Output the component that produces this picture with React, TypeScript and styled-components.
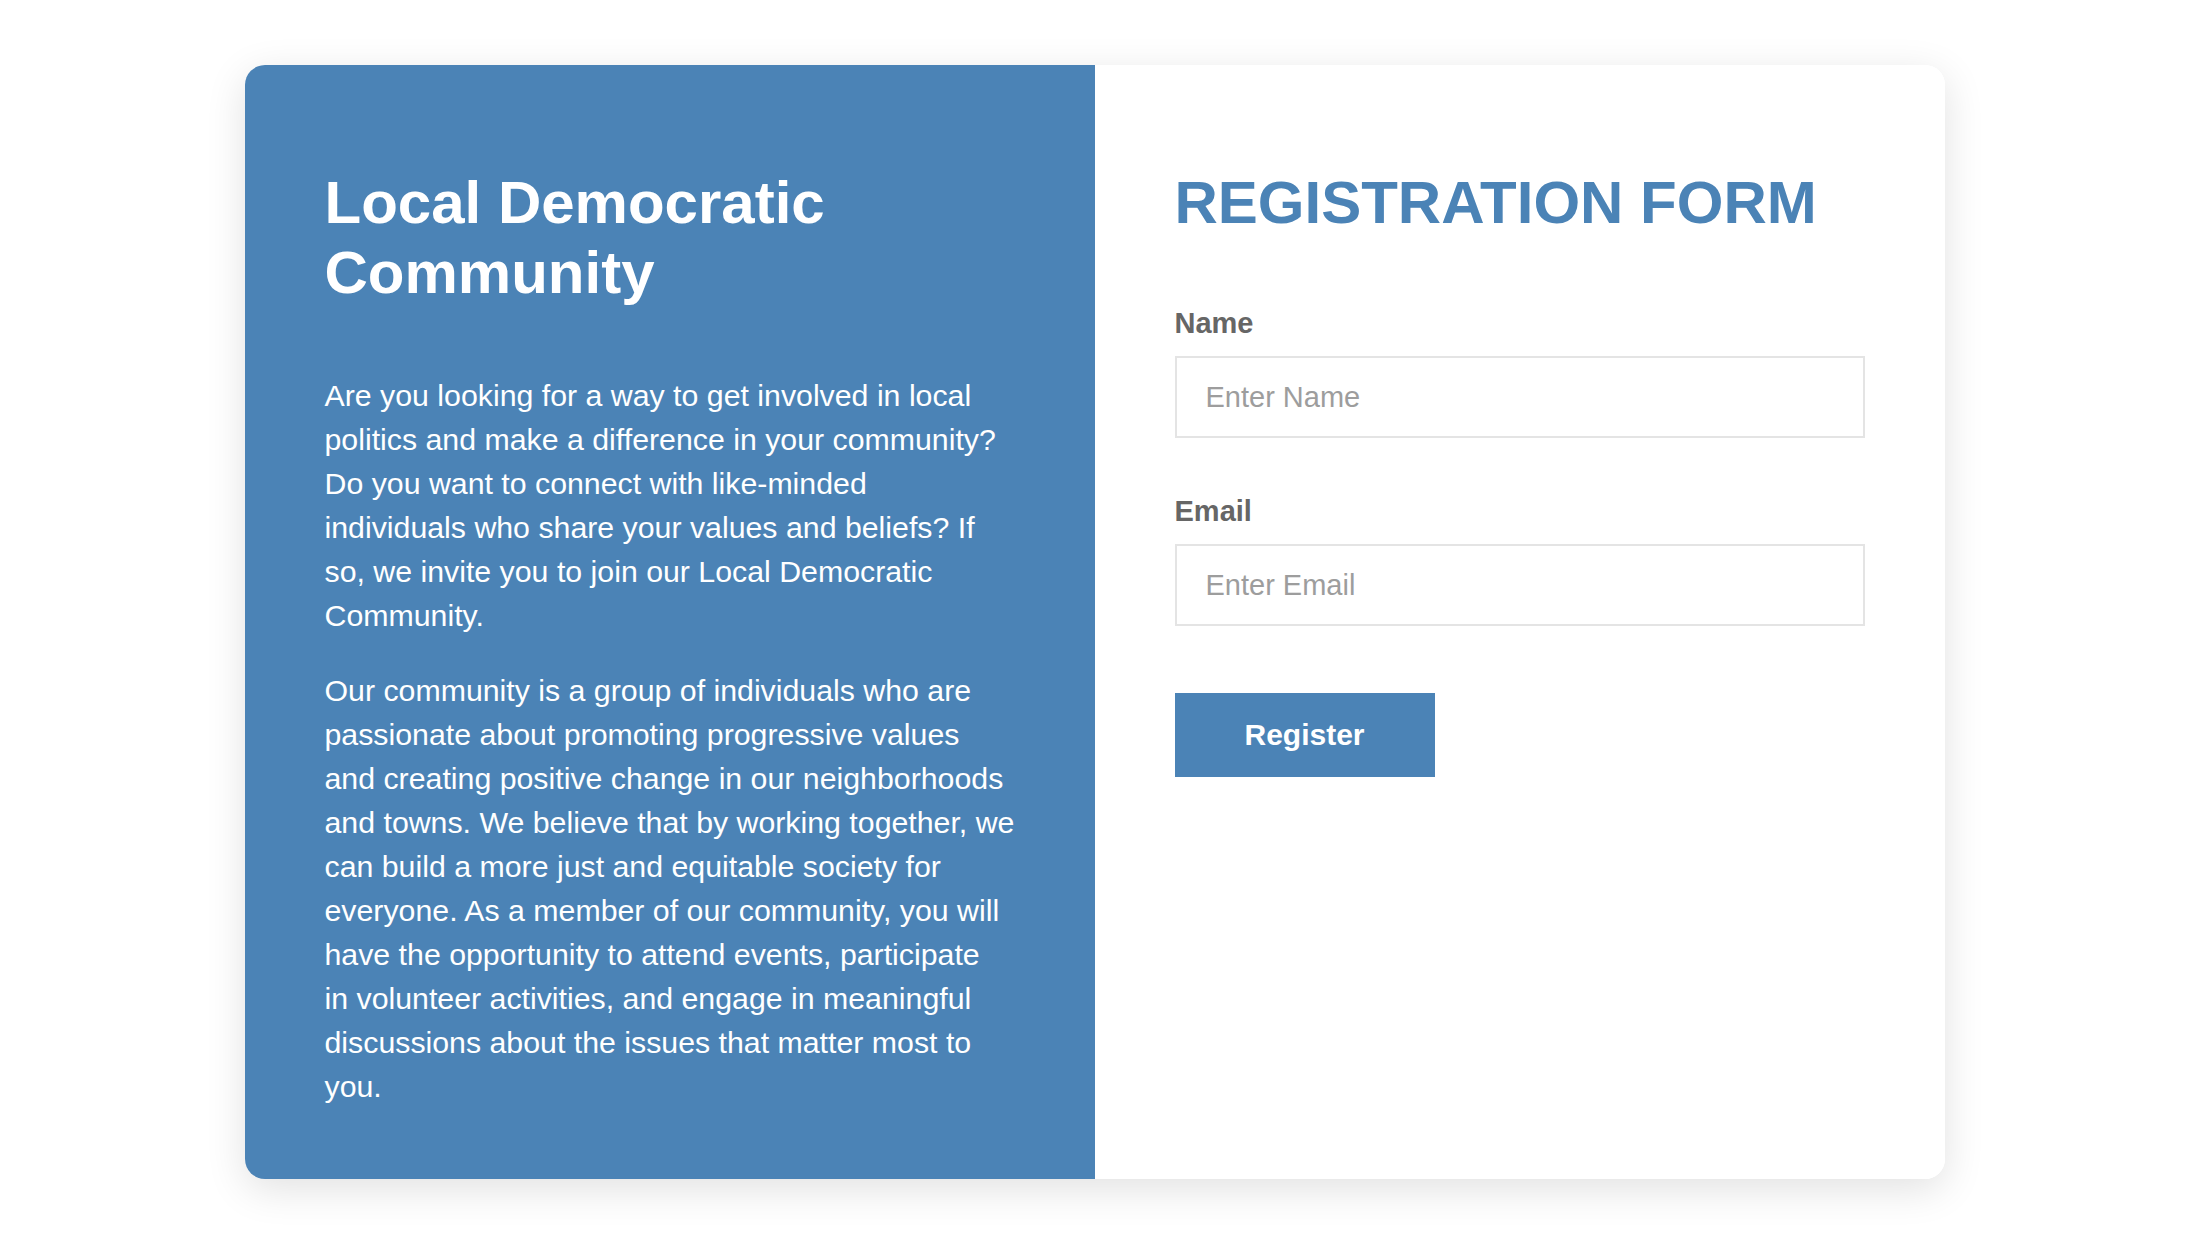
import React from "react";
import styled, { createGlobalStyle } from "styled-components";

const BLUE = "#4b83b6";

const GlobalStyle = createGlobalStyle`
  html, body {
    margin: 0;
    padding: 0;
    background: #ffffff;
  }
  body {
    font-family: "Liberation Sans", Arial, Helvetica, sans-serif;
    -webkit-font-smoothing: antialiased;
  }
  *, *::before, *::after {
    box-sizing: border-box;
  }
`;

const Page = styled.main`
  display: flex;
  justify-content: center;
  padding: 65px 0 80px;
`;

const Card = styled.section`
  width: 1700px;
  display: grid;
  grid-template-columns: 1fr 1fr;
  border-radius: 20px;
  overflow: hidden;
  background: #ffffff;
  box-shadow: 0 10px 40px rgba(0, 0, 0, 0.12);
`;

const Panel = styled.div<{ $filled?: boolean }>`
  padding: 103px 80px 70px;
  background: ${(p) => (p.$filled ? BLUE : "#ffffff")};
  color: ${(p) => (p.$filled ? "#ffffff" : "#333333")};
`;

const Heading = styled.h1<{ $tone: "light" | "brand"; $gap: number }>`
  margin: 0 0 ${(p) => p.$gap}px;
  font-size: 60px;
  line-height: 70px;
  font-weight: 700;
  color: ${(p) => (p.$tone === "light" ? "#ffffff" : BLUE)};
`;

const Paragraph = styled.p`
  margin: 0 0 31px;
  font-size: 30.3px;
  line-height: 44px;
  white-space: pre;
  &:last-child {
    margin-bottom: 0;
  }
`;

const Form = styled.form`
  display: flex;
  flex-direction: column;
  align-items: flex-start;
`;

const Field = styled.div`
  width: 100%;
  margin-bottom: 56px;
`;

const Label = styled.label`
  display: block;
  margin-bottom: 15px;
  font-size: 29px;
  line-height: 35px;
  font-weight: 700;
  color: #666666;
`;

const Input = styled.input`
  display: block;
  width: 100%;
  height: 82px;
  padding: 0 29px;
  border: 2px solid #e4e4e4;
  border-radius: 0;
  font-family: inherit;
  font-size: 29px;
  color: #333333;
  background: #ffffff;
  outline: none;
  &::placeholder {
    color: #9d9d9d;
  }
`;

const Button = styled.button`
  margin-top: 11px;
  height: 84px;
  padding: 0 70px;
  border: none;
  border-radius: 0;
  background: ${BLUE};
  color: #ffffff;
  font-family: inherit;
  font-size: 30px;
  font-weight: 700;
  cursor: pointer;
`;

const intro = [
  "Are you looking for a way to get involved in local",
  "politics and make a difference in your community?",
  "Do you want to connect with like-minded",
  "individuals who share your values and beliefs? If",
  "so, we invite you to join our Local Democratic",
  "Community.",
];

const about = [
  "Our community is a group of individuals who are",
  "passionate about promoting progressive values",
  "and creating positive change in our neighborhoods",
  "and towns. We believe that by working together, we",
  "can build a more just and equitable society for",
  "everyone. As a member of our community, you will",
  "have the opportunity to attend events, participate",
  "in volunteer activities, and engage in meaningful",
  "discussions about the issues that matter most to",
  "you.",
];

export default function App() {
  return (
    <>
      <GlobalStyle />
      <Page>
        <Card>
          <Panel $filled>
            <Heading $tone="light" $gap={66}>
              Local Democratic Community
            </Heading>
            <Paragraph>{intro.join("\n")}</Paragraph>
            <Paragraph>{about.join("\n")}</Paragraph>
          </Panel>
          <Panel>
            <Heading $tone="brand" $gap={68}>
              REGISTRATION FORM
            </Heading>
            <Form onSubmit={(e) => e.preventDefault()}>
              <Field>
                <Label htmlFor="name">Name</Label>
                <Input id="name" type="text" placeholder="Enter Name" />
              </Field>
              <Field>
                <Label htmlFor="email">Email</Label>
                <Input id="email" type="email" placeholder="Enter Email" />
              </Field>
              <Button type="submit">Register</Button>
            </Form>
          </Panel>
        </Card>
      </Page>
    </>
  );
}
